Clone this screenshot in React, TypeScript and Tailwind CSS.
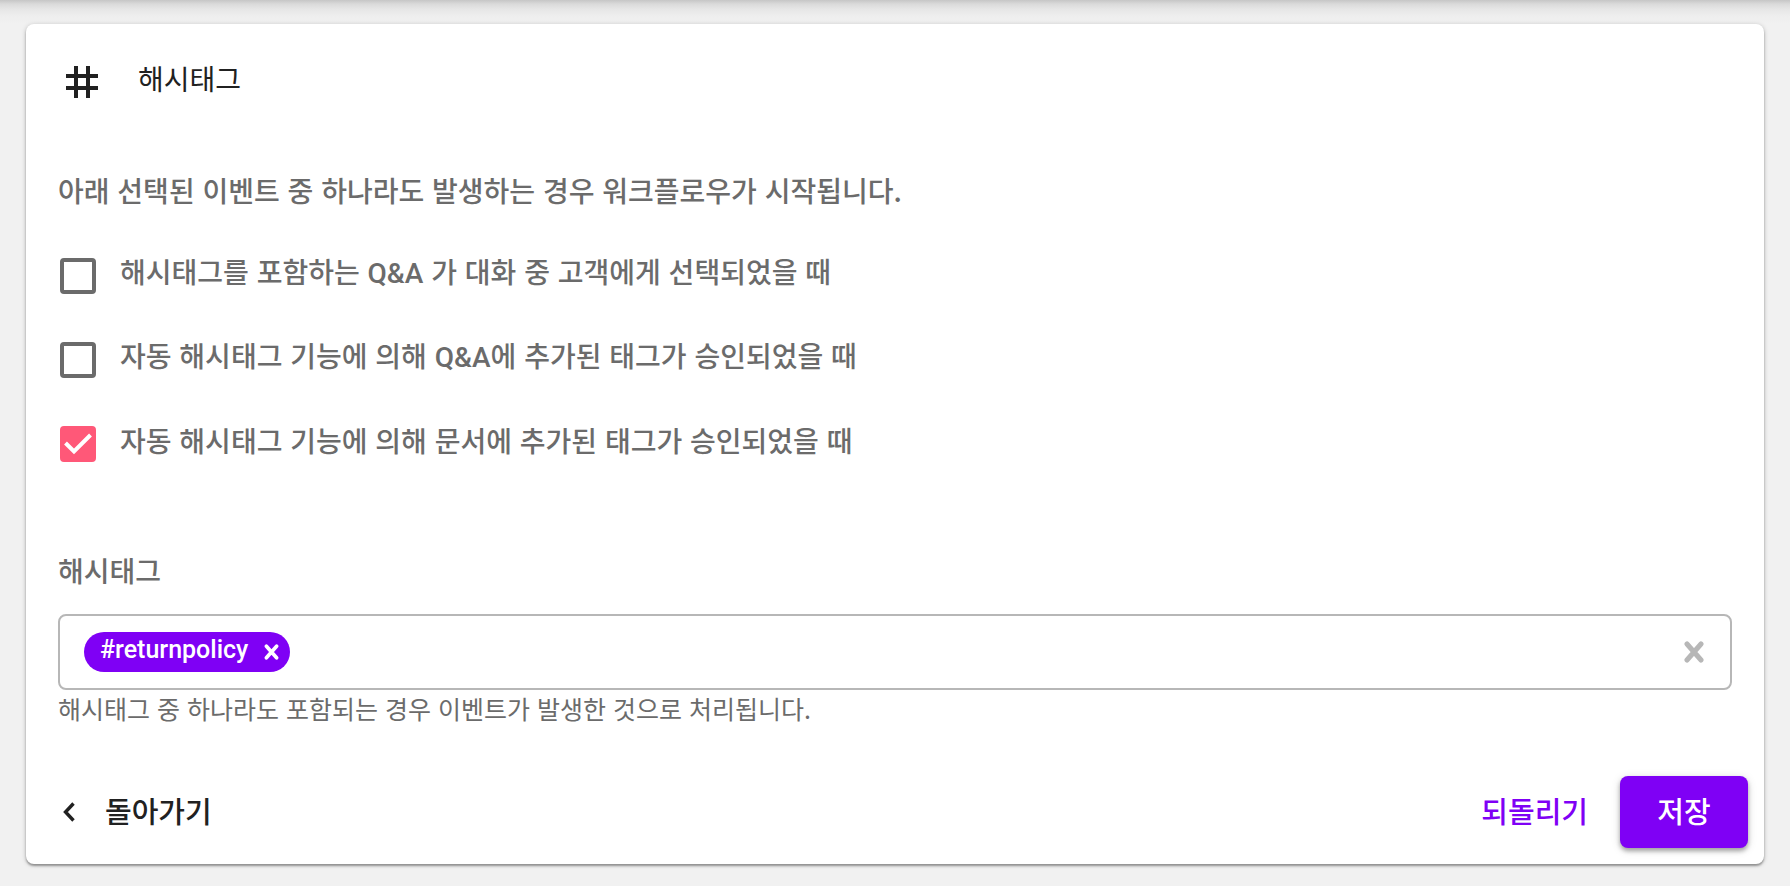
import { useState, type ReactNode } from "react";

const QNA = <span className="font-['Roboto',sans-serif]">Q&amp;A</span>;

type WorkflowEvent = { id: string; label: ReactNode; checked: boolean };

const INITIAL_EVENTS: WorkflowEvent[] = [
  { id: "qna-selected", label: <>해시태그를 포함하는 {QNA} 가 대화 중 고객에게 선택되었을 때</>, checked: false },
  { id: "qna-approved", label: <>자동 해시태그 기능에 의해 {QNA}에 추가된 태그가 승인되었을 때</>, checked: false },
  { id: "doc-approved", label: "자동 해시태그 기능에 의해 문서에 추가된 태그가 승인되었을 때", checked: true },
];

const INITIAL_TAGS = ["#returnpolicy"];

function HashIcon() {
  return (
    <svg viewBox="0 0 32 32" className="size-8" fill="currentColor" aria-hidden="true">
      <path d="M8 0h4v32H8zM20 0h4v32h-4zM0 8h32v4H0zM0 20h32v4H0z" />
    </svg>
  );
}

function ChevronLeftIcon() {
  return (
    <svg viewBox="0 0 12 20" className="h-5 w-3" fill="none" stroke="currentColor" strokeWidth="3.400" aria-hidden="true">
      <path d="M10.500 1.500 2.500 10l8 8.500" />
    </svg>
  );
}

function CloseIcon({ className }: { className: string }) {
  return (
    <svg viewBox="0 0 20 22" className={className} fill="none" stroke="currentColor" strokeLinecap="round" aria-hidden="true">
      <path d="M3 3l14 16M17 3 3 19" />
    </svg>
  );
}

function EventCheckbox({ id, label, checked, onChange }: WorkflowEvent & { onChange: () => void }) {
  return (
    <div className="flex h-[84px] items-center gap-6">
      <span className="relative ml-0.5 size-9 shrink-0">
        <input
          id={id}
          type="checkbox"
          checked={checked}
          onChange={onChange}
          className="peer block size-9 appearance-none rounded-sm border-4 border-[#6b6b6b] bg-white checked:border-[#ff5878] checked:bg-[#ff5878]"
        />
        <svg
          viewBox="0 0 36 36"
          className="pointer-events-none absolute inset-0 hidden size-9 text-white peer-checked:block"
          fill="none"
          stroke="currentColor"
          strokeWidth="4"
          aria-hidden="true"
        >
          <path d="M5.500 17 14 25.500 30.500 9" />
        </svg>
      </span>
      <label htmlFor={id} className="pb-2 text-[28px] leading-10 font-medium">
        {label}
      </label>
    </div>
  );
}

export default function App() {
  const [events, setEvents] = useState(INITIAL_EVENTS);
  const [tags, setTags] = useState(INITIAL_TAGS);
  const [text, setText] = useState("");

  const toggleEvent = (id: string) => {
    setEvents(events.map((e) => (e.id === id ? { ...e, checked: !e.checked } : e)));
  };

  const handleReset = () => {
    setEvents(INITIAL_EVENTS);
    setTags(INITIAL_TAGS);
    setText("");
  };

  return (
    <main
      lang="ko"
      className="min-h-screen bg-[#f1f1f1] bg-[linear-gradient(to_bottom,#c6c6c6_0,#dadada_4px,#e6e6e6_9px,#eeeeee_16px,#f1f1f1_24px)] bg-[length:100%_24px] bg-no-repeat px-[26px] pt-6 pb-[22px] font-['Noto_Sans_CJK_KR',sans-serif] text-[#6b6b6b]"
    >
      <form
        onSubmit={(event) => event.preventDefault()}
        className="rounded-lg bg-white p-4 shadow-[0_2px_2px_rgba(0,0,0,0.3),0_1px_5px_rgba(0,0,0,0.22)]"
      >
        <div className="px-4">
          <header className="flex h-[84px] items-center gap-10 pl-2 text-[#212121]">
            <HashIcon />
            <h1 className="pb-2 text-[28px] leading-10">해시태그</h1>
          </header>

          <fieldset className="pt-[46px]">
            <legend className="contents">
              <span className="block text-[28px] leading-10 font-medium">
                아래 선택된 이벤트 중 하나라도 발생하는 경우 워크플로우가 시작됩니다.
              </span>
            </legend>
            <div className="pt-6">
              {events.map((e) => (
                <EventCheckbox key={e.id} {...e} onChange={() => toggleEvent(e.id)} />
              ))}
            </div>
          </fieldset>

          <label htmlFor="hashtag" className="mt-16 block text-[28px] leading-10 font-medium">
            해시태그
          </label>
          <div className="mt-6 flex h-[76px] items-center rounded-lg border-2 border-[#b7b7b7] px-6">
            {tags.map((tag) => (
              <span
                key={tag}
                className="flex h-10 items-center gap-4 rounded-full bg-[#7f00f5] pr-[11px] pl-4 font-['Roboto','Noto_Sans_CJK_KR',sans-serif] text-[25px] font-medium text-white"
              >
                <span className="pb-1">{tag}</span>
                <button type="button" aria-label="태그 삭제" onClick={() => setTags(tags.filter((t) => t !== tag))}>
                  <CloseIcon className="h-4 w-[15px] stroke-[5]" />
                </button>
              </span>
            ))}
            <input
              id="hashtag"
              value={text}
              onChange={(event) => setText(event.target.value)}
              className="mx-4 min-w-0 flex-1 text-[25px] outline-none"
            />
            <button type="button" aria-label="모두 지우기" onClick={() => setTags([])} className="mr-0.5 text-[#b7b7b7]">
              <CloseIcon className="h-[22px] w-5 stroke-[5]" />
            </button>
          </div>
          <p className="text-[25px] leading-9">
            해시태그 중 하나라도 포함되는 경우 이벤트가 발생한 것으로 처리됩니다.
          </p>
        </div>

        <footer className="mt-[50px] flex items-center text-[29px] leading-10 font-medium">
          <button type="button" className="flex items-center gap-[30px] pl-[21px] text-[#212121]">
            <ChevronLeftIcon />
            <span className="pb-1">돌아가기</span>
          </button>
          <button type="button" onClick={handleReset} className="ml-auto px-8 pb-1 text-[#7f00f5]">
            되돌리기
          </button>
          <button
            type="submit"
            className="h-[72px] w-32 rounded-lg bg-[#7f00f5] pb-1 text-white shadow-[0_3px_4px_rgba(0,0,0,0.3),0_2px_10px_rgba(0,0,0,0.15)]"
          >
            저장
          </button>
        </footer>
      </form>
    </main>
  );
}
